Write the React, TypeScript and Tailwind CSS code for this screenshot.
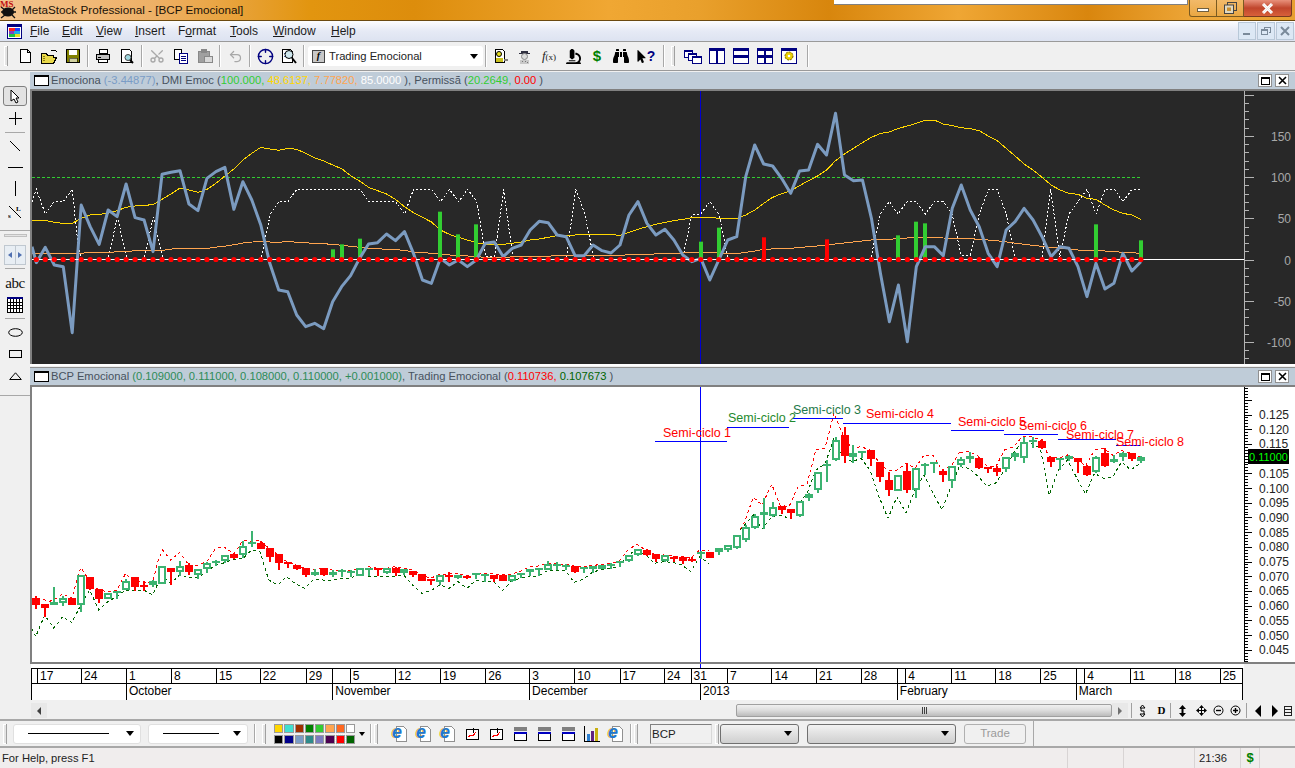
import React from 'react';
import { Crosshair, Scissors, Undo2 } from 'lucide-react';
import { FaBinoculars, FaMicroscope, FaMousePointer } from 'react-icons/fa';

// ---------- chart data (read off the screen, 1/3 px units on y) ----------
const X = (n: number) => 36.3 + 8.98 * n;
const yTop = (v: number) => 90 + v / 3;

const emociona = [518,472,525,530,728,345,410,463,360,380,282,383,390,485,253,247,242,342,362,265,245,232,358,275,330,405,520,600,605,675,710,700,716,635,590,557,505,462,458,432,452,425,490,570,580,505,525,510,530,510,460,456,500,475,465,420,394,398,435,440,497,497,465,482,489,465,375,335,400,435,418,450,495,515,505,570,510,450,440,260,165,222,228,265,310,243,240,163,195,70,255,272,270,385,550,695,585,755,530,470,470,497,355,285,360,410,490,530,420,395,355,390,440,500,470,475,530,620,520,597,580,490,543,515];
const dmiYellow = [391,391,397,400,400,385,375,373,370,362,352,348,346,344,328,312,294,300,307,298,280,258,237,210,190,172,177,181,175,178,190,204,213,225,236,257,273,292,302,312,328,350,368,382,396,420,433,442,450,458,463,463,463,460,456,450,447,442,437,436,435,434,433,433,434,436,427,418,410,403,397,392,388,383,381,382,385,385,385,375,360,340,322,311,303,287,272,258,240,212,192,175,158,142,130,126,115,108,100,91,90,102,107,113,116,122,138,152,175,198,222,240,262,285,300,310,313,325,328,345,360,370,375,388];
const orangeA = [5,490,130,490,153,487,199,487,244,484,290,481,335,481,358,477,380,475,449,475,472,471,495,468,517,464,540,459,563,456,585,455,630,457,652,454,675,457,720,460,766,463,789,466,811,469,834,472,857,475,880,476,902,478,925,479,947,481,970,486,1016,490,1038,493,1061,495,1084,497,1107,498,1130,500,1153,502,1198,503,1221,500,1289,500,1312,499,1334,496,1494,496,1530,493,1568,493];
const orangeB = [0,493,30,490,123,488,215,490,250,484,275,478,340,475,405,468,449,462,493,456,536,450,580,448,645,442,711,444,776,446,841,452,906,463,971,472,1037,480,1103,483,1146,487,1190,490];
const whiteA = [[5,335,16,298,39,372,61,335,84,335,107,298,122,470,130,500],[199,500,221,380,244,500],[290,500,312,380,335,500],[585,500,608,372,630,335,652,335,675,298,834,298,857,335,925,335,947,372,970,298,1016,298,1038,335,1061,298,1084,335,1107,298,1130,335,1153,500,1175,500,1198,298,1221,500],[1357,500,1380,298,1403,372,1425,500]];
const whiteB = [[80,500,101,375,123,372,145,335,167,372,188,500],[536,500,558,372,580,335,601,372,623,335,645,335,667,372,689,335,711,335,732,372,754,495,776,495,798,372,820,298,841,298,863,372,884,500],[950,500,971,298,993,500,1015,372,1037,335,1059,298,1081,372,1103,298,1125,298,1146,335,1168,298,1190,298]];
const greenBars: [number, number][] = [[33,478],[34,463],[36,446],[45,365],[47,433],[49,403],[74,455],[76,413],[96,436],[98,395],[99,400],[118,403],[123,451]];
const redBars: [number, number][] = [[81,442],[88,448]];

type Candle = ['g' | 'r' | 'h', number, number, number, number];
// n0..n79: y = 500 + v/3
const candlesA: Candle[] = [
  ['r',293,315,288,326],['h',313,325,313,352],['g',305,316,262,316],['g',295,310,288,317],['r',295,315,295,315],['g',225,315,225,335],['r',232,268,232,270],['r',268,297,268,308],['g',278,297,278,297],['g',272,276,272,298],
  ['g',242,270,236,270],['r',232,262,232,272],['r',255,260,243,272],['g',243,255,240,262],['g',198,252,198,252],['r',205,215,205,255],['g',197,217,183,227],['r',195,215,190,225],['g',206,226,206,237],['g',188,206,186,218],
  ['g',183,187,180,197],['g',165,183,165,190],['r',162,173,162,178],['g',138,165,122,175],['g',125,130,93,140],['r',128,147,122,147],['r',145,172,145,185],['r',163,190,163,210],['r',185,190,185,203],['r',196,206,196,210],
  ['r',205,225,205,232],['g',215,226,208,228],['r',205,225,205,228],['g',215,225,210,232],['g',211,214,208,232],['g',212,215,210,230],['g',203,228,203,228],['g',203,207,203,228],['r',205,210,205,228],['g',205,220,205,222],
  ['r',203,218,200,228],['g',206,218,206,225],['r',212,225,212,232],['r',222,243,222,243],['r',237,243,237,255],['g',224,245,224,255],['r',226,232,215,245],['g',224,235,224,237],['r',228,234,225,237],['g',220,224,220,237],
  ['g',222,226,222,245],['r',224,236,224,245],['r',224,243,224,243],['g',224,243,224,245],['g',220,224,218,235],['g',206,216,206,227],['g',205,209,205,228],['g',193,210,184,210],['g',193,197,187,210],['g',195,198,193,210],
  ['r',197,215,197,218],['g',202,205,202,218],['g',198,208,198,218],['g',196,208,196,208],['g',193,197,190,206],['g',184,187,184,200],['g',165,184,165,186],['g',146,166,146,168],['r',150,165,148,167],['r',163,176,163,187],
  ['g',165,184,165,186],['r',170,176,167,187],['r',172,184,168,192],['r',177,183,172,187],['g',157,162,153,178],['r',155,175,155,175],['g',144,156,144,165],['g',135,150,135,157],['g',105,144,105,146],['g',80,120,75,125],
];
// n80..n123: y = 390 + v/3
const candlesB: Candle[] = [
  ['g',378,415,373,418],['g',367,375,325,418],['g',350,378,335,380],['r',348,360,348,372],['r',358,368,358,388],['g',333,378,333,380],['g',313,325,310,332],['g',245,300,245,308],['g',222,226,210,275],['g',150,210,140,212],
  ['r',135,198,110,220],['g',190,202,165,220],['g',183,190,183,205],['r',180,208,180,228],['r',216,262,216,275],['r',270,300,245,318],['g',255,302,255,304],['r',243,300,220,308],['g',235,300,235,325],['g',222,226,220,255],
  ['g',217,222,217,248],['r',242,256,238,275],['g',228,274,228,293],['g',208,226,202,230],['g',198,208,185,220],['r',205,235,200,238],['r',230,235,230,248],['r',233,245,228,257],['g',200,237,200,247],['g',190,200,187,212],
  ['g',155,203,140,220],['g',150,155,140,175],['r',153,173,148,176],['r',200,217,200,230],['g',205,208,203,240],['g',198,207,195,212],['r',205,215,203,248],['r',228,254,226,257],['g',200,245,198,248],['r',190,227,175,230],
  ['g',208,217,195,220],['g',190,202,187,212],['r',190,208,190,212],['g',201,212,198,220],
];

// dashed envelope: x,y pairs per zoomed region
const upperA = [5,300,17,295,40,298,55,305,71,300,98,282,125,295,152,203,165,222,190,258,206,270,233,275,260,270,287,220,300,235,330,245,350,250,370,240,385,180,398,150,422,180,449,157,476,195,503,195,530,185,557,145,584,142,611,162,640,120,665,125,690,120,716,145,745,165,770,185,797,195,824,205,851,210,879,205,905,210,932,210,960,212,990,205];
const upperB = [24,200,52,205,78,205,105,200,130,205,158,210,185,225,212,235,240,222,267,222,294,220,321,228,348,220,375,220,402,222,427,222,453,222,480,215,508,200,535,198,562,190,589,192,616,193,642,198,669,200,696,197,723,193,750,190,777,184,804,150,830,133,857,150,884,163,911,165,938,168,965,168,992,175,1019,150,1046,152];
const upperC = [300,418,312,400,340,322,366,345,395,283,420,345,447,350,474,290,501,282,528,178,555,175,582,70,609,135,636,175,663,170,690,180,717,216,744,243,771,240,798,220,825,235,852,195,879,195,906,240,933,228,960,185];
const upperD = [30,187,57,185,83,198,110,228,136,232,163,180,190,170,216,140,243,140,270,150,297,200,324,205,351,195,378,205,405,228,432,180,459,175,486,195,513,182,540,190,567,200];
const lowerA = [5,385,17,410,44,345,71,385,98,350,125,368,150,320,179,270,206,330,233,305,260,290,287,270,314,270,341,270,368,285,395,225,422,250,449,225,476,232,503,232,530,215,557,195,584,188,611,178,640,175,665,150,690,155,716,240,743,255,770,230,797,252,824,265,851,238,879,240,905,242,932,235,960,235,985,225];
const lowerB = [24,228,52,228,78,228,105,228,132,226,158,255,185,280,212,272,240,255,267,265,294,245,321,265,348,240,375,245,402,245,427,272,453,245,480,235,508,228,535,228,562,212,589,210,616,212,642,247,669,238,696,218,723,208,750,206,777,198,804,165,830,150,857,165,884,190,911,185,938,187,965,195,992,215,1019,170,1046,190];
const lowerC = [300,420,340,375,366,418,395,380,420,375,447,385,474,345,501,310,528,240,555,222,582,145,609,200,636,215,663,205,690,240,717,320,744,385,771,320,798,368,825,300,852,255,879,310,906,360,933,290,960,225];
const lowerD = [30,230,57,235,83,258,110,288,136,280,163,240,190,190,216,155,243,160,270,175,297,315,324,240,351,210,378,262,405,312,432,250,459,265,486,262,513,215,540,240,567,222];

const pairs = (a: number[], fx: (v: number) => number, fy: (v: number) => number) => {
  const out: string[] = [];
  for (let i = 0; i < a.length; i += 2) out.push(`${fx(a[i]).toFixed(1)},${fy(a[i + 1]).toFixed(1)}`);
  return out.join(' ');
};
const z9x = (v: number) => 30 + v / 2.529;
const z10x = (v: number) => 650 + v / 2.423;
const low = (v: number) => 500 + v / 3;
const up = (v: number) => 390 + v / 3;

const labels: [string, number, number, string][] = [
  ['Semi-ciclo 1', 663, 437, '#ff0000'],
  ['Semi-ciclo 2', 728, 422, '#1f8a2e'],
  ['Semi-ciclo 3', 793, 414, '#1f7a4a'],
  ['Semi-ciclo 4', 866, 418, '#ff0000'],
  ['Semi-ciclo 5', 958, 426, '#ff0000'],
  ['Semi-ciclo 6', 1019, 430, '#ff0000'],
  ['Semi-ciclo 7', 1066, 439, '#ff0000'],
  ['Semi-ciclo 8', 1116, 446, '#ff0000'],
];
const cycleLines = [[655,727,441.5],[727,789,427.5],[793,843,418.5],[843,951,423.5],[951,1004,430.5],[1004,1058,434.5],[1058,1116,439.5],[1116,1140,445.5]];

// ---------- charts ----------
function IndicatorChart() {
  const ticks: number[] = [];
  for (let v = -120; v <= 200; v += 10) ticks.push(v);
  const vy = (v: number) => 259.5 - v * 0.824;
  return (
    <svg className="block" width="1265" height="273" viewBox="30 91 1265 273" style={{ fontFamily: '"Liberation Sans", sans-serif' }}>
      <line x1="32" x2="1141" y1="177.5" y2="177.5" stroke="#32cd32" strokeDasharray="3 2" shapeRendering="crispEdges" />
      <line x1="700.5" x2="700.5" y1="91" y2="364" stroke="#0000d0" shapeRendering="crispEdges" />
      {whiteA.map((a, i) => <polyline key={i} points={pairs(a, z9x, yTop)} fill="none" stroke="#fff" strokeDasharray="2 2" shapeRendering="crispEdges" />)}
      {whiteB.map((a, i) => <polyline key={i} points={pairs(a, z10x, yTop)} fill="none" stroke="#fff" strokeDasharray="2 2" shapeRendering="crispEdges" />)}
      <polyline points={`32,${yTop(391)} ` + dmiYellow.map((v, i) => `${X(i)},${yTop(v)}`).join(' ')} fill="none" stroke="#ffd700" shapeRendering="crispEdges" />
      <polyline points={pairs(orangeA, z9x, yTop) + ' ' + pairs(orangeB, z10x, yTop)} fill="none" stroke="#ffa54f" shapeRendering="crispEdges" />
      {greenBars.map(([n, t]) => <line key={n} x1={Math.round(X(n))} x2={Math.round(X(n))} y1={yTop(t)} y2="259" stroke="#32cd32" strokeWidth="4" />)}
      {redBars.map(([n, t]) => <line key={n} x1={Math.round(X(n))} x2={Math.round(X(n))} y1={yTop(t)} y2="259" stroke="#ff0000" strokeWidth="4" />)}
      <polyline points={`32,${yTop(470)} ` + emociona.map((v, i) => `${X(i)},${yTop(v)}`).join(' ')} fill="none" stroke="#7b9bc0" strokeWidth="3" strokeLinejoin="round" />
      <line x1="32" x2="1245" y1="259.5" y2="259.5" stroke="#fff" shapeRendering="crispEdges" />
      {emociona.map((_, i) => <circle key={i} cx={X(i)} cy="259.5" r="2.6" fill="#ff0000" />)}
      <line x1="1244.5" x2="1244.5" y1="91" y2="364" stroke="#b4b4b4" shapeRendering="crispEdges" />
      {ticks.map(v => <line key={v} x1="1245" x2={v % 50 === 0 ? 1254 : 1249} y1={Math.round(vy(v)) + 0.5} y2={Math.round(vy(v)) + 0.5} stroke="#b4b4b4" shapeRendering="crispEdges" />)}
      {[150, 100, 50, 0, -50, -100].map(v => <text key={v} x="1291" y={vy(v) + 5} textAnchor="end" fontSize="12" fill="#a8a8a8">{v}</text>)}
    </svg>
  );
}

function CandleMark({ c, n, base }: { c: Candle; n: number; base: (v: number) => number }) {
  const [k, t, b, wt, wb] = c;
  const cx = Math.round(X(n));
  const col = k === 'g' ? '#3cb371' : '#ff0000';
  const top = Math.round(base(t));
  const bot = Math.round(base(b));
  const solid = k === 'r' || bot - top < 3;
  return (
    <g shapeRendering="crispEdges">
      <rect x={cx - 1} width="2" y={base(wt)} height={Math.max(1, base(wb) - base(wt))} fill={col} />
      {solid ? (
        <rect x={cx - 4} width="8" y={top} height={Math.max(2, bot - top)} fill={col} />
      ) : (
        <rect x={cx - 3} width="6" y={top + 1} height={bot - top - 2} fill="#fff" stroke={col} strokeWidth="2" />
      )}
    </g>
  );
}

function PriceChart() {
  const ticks: number[] = [];
  for (let i = -10; i <= 85; i++) ticks.push(i);
  // 0.110 sits under the last-price box, as on the real axis
  const labelsY = Array.from({ length: 17 }, (_, i) => i).filter(i => i !== 3);
  return (
    <svg className="block bg-white" width="1265" height="275" viewBox="30 387 1265 275" style={{ fontFamily: '"Liberation Sans", sans-serif' }}>
      <line x1="700.5" x2="700.5" y1="387" y2="662" stroke="#0000ff" shapeRendering="crispEdges" />
      {[pairs(upperA, v => 30 + v / 3, low), pairs(upperB, v => 360 + v / 3, low), pairs(upperC, v => 640 + v / 3, up), pairs(upperD, v => 950 + v / 2.99, up)].map((p, i) => (
        <polyline key={i} points={p} fill="none" stroke="#ff0000" strokeDasharray="3 3" shapeRendering="crispEdges" />
      ))}
      {[pairs(lowerA, v => 30 + v / 3, low), pairs(lowerB, v => 360 + v / 3, low), pairs(lowerC, v => 640 + v / 3, up), pairs(lowerD, v => 950 + v / 2.99, up)].map((p, i) => (
        <polyline key={i} points={p} fill="none" stroke="#006400" strokeDasharray="3 3" shapeRendering="crispEdges" />
      ))}
      {candlesA.map((c, i) => <CandleMark key={i} c={c} n={i} base={low} />)}
      {candlesB.map((c, i) => <CandleMark key={i} c={c} n={i + 80} base={up} />)}
      {cycleLines.map(([a, b, y], i) => <line key={i} x1={a} x2={b} y1={y} y2={y} stroke="#0000ff" shapeRendering="crispEdges" />)}
      {labels.map(([t, x, y, c]) => <text key={t} x={x} y={y} fontSize="12.5" fill={c}>{t}</text>)}
      <line x1="1244.5" x2="1244.5" y1="387" y2="662" stroke="#000" shapeRendering="crispEdges" />
      {ticks.map(i => {
        const y = Math.round(414.5 + i * 2.94) + 0.5;
        return <line key={i} x1="1245" x2={i % 5 === 0 ? 1252 : 1248} y1={y} y2={y} stroke="#000" shapeRendering="crispEdges" />;
      })}
      {labelsY.map(i => <text key={i} x="1259" y={419 + i * 14.7} fontSize="12" fill="#222">{(0.125 - i * 0.005).toFixed(3)}</text>)}
      <rect x="1248" y="449" width="41" height="15" fill="#000" />
      <text x="1249" y="460.5" fontSize="11" fill="#00ff00">0.11000</text>
    </svg>
  );
}

// ---------- date axis ----------
const dayCells: [string, number][] = [['',31],['17',37],['24',81],['1',126],['8',171],['15',216],['22',260],['29',306],['',332.5],['5',350],['12',395],['19',440],['26',485.5],['3',529.5],['10',574.6],['17',620],['24',664.5],['31',691],['7',727.5],['14',772],['21',816.6],['28',861.4],['',897.5],['4',906],['11',952],['18',996],['25',1041],['',1076.6],['4',1085],['11',1130.5],['18',1176],['25',1220.5]];
const monthCells: [string, number][] = [['',31],['October',126],['November',332.5],['December',529.5],['2013',700.5],['February',897.5],['March',1076.6]];
const AXIS_END = 1243;

function AxisRow({ cells, className }: { cells: [string, number][]; className: string }) {
  return (
    <div className={`flex ${className}`}>
      {cells.map(([t, x], i) => (
        <div key={i} className="border-l border-black pl-[2px] leading-[15px] overflow-hidden" style={{ width: (i + 1 < cells.length ? cells[i + 1][1] : AXIS_END) - x }}>{t}</div>
      ))}
    </div>
  );
}

// ---------- small toolbar drawings ----------
const Px = ({ w = 16, h = 16, children }: { w?: number; h?: number; children: React.ReactNode }) => (
  <svg width={w} height={h} viewBox={`0 0 ${w} ${h}`} shapeRendering="crispEdges" className="block">{children}</svg>
);
const Slot = ({ w = 24, children }: { w?: number; children?: React.ReactNode }) => (
  <div className="flex items-center justify-center shrink-0 h-full" style={{ width: w }}>{children}</div>
);
const Sep = ({ w = 6 }: { w?: number }) => (
  <div className="flex justify-center shrink-0 py-[3px] h-full" style={{ width: w }}><div className="w-[2px] h-full bg-[#a8a8a8] border-r border-white" /></div>
);
const Grip = () => <div className="shrink-0 w-[3px] h-[20px] self-center border-l border-t border-b border-white bg-[#e4e4e4] shadow-[1px_0_0_#a0a0a0]" />;

const NewDoc = () => <Px><path d="M3.5 1.5h7l3 3v10h-10z M10.5 1.5v3h3" fill="#fff" stroke="#000" /></Px>;
const OpenFolder = () => <Px w={18}><path d="M1.5 5.5h5l1 2h6v2h3l-3 6h-12z" fill="#e8d84a" stroke="#000" /><path d="M3 8h2M3 10h2M3 12h2" stroke="#8a7a10" /><path d="M11 3l2-1h2l2 2" fill="none" stroke="#000" /></Px>;
const Save = () => <Px><rect x="1.5" y="1.5" width="13" height="13" fill="#808000" stroke="#000" /><rect x="4" y="2" width="8" height="5" fill="#fff" /><rect x="4" y="10" width="8" height="4" fill="#d0d0a0" stroke="#000" strokeWidth="0.5" /></Px>;
const Printer = () => <Px><path d="M4.5 1.5h8v4h-8z" fill="#fff" stroke="#000" /><path d="M1.5 6.5h13v5h-13z" fill="#c0c0c0" stroke="#000" /><path d="M3.5 11.5h9v3h-9z" fill="#fff" stroke="#000" /><path d="M3 9h3" stroke="#000" /></Px>;
const Preview = () => <Px><path d="M2.5 1.5h8l2 2v11h-10z" fill="#fff" stroke="#000" /><circle cx="9" cy="9.5" r="3" fill="#9fd8e0" stroke="#444" shapeRendering="auto" /><path d="M11 12l3 3" stroke="#000" strokeWidth="2" shapeRendering="auto" /></Px>;
const CopyDoc = () => <Px><path d="M1.5 1.5h7v10h-7z" fill="#fff" stroke="#000" /><path d="M6.5 5.5h8v10h-8z" fill="#fff" stroke="#000080" /><path d="M8 8h5M8 10h5M8 12h5" stroke="#000080" /></Px>;
const Paste = () => <Px><path d="M1.5 3.5h11v11h-11z" fill="#a0a0a0" stroke="#888" /><rect x="4" y="1" width="6" height="4" fill="#888" /><path d="M7.5 8.5h8v6h-8z" fill="#d8d8d8" stroke="#888" /></Px>;
const ZoomDoc = () => <Px w={18}><path d="M2.5 1.5h8l2 2v11h-10z" fill="#fff" stroke="#000" /><path d="M4 5h5M4 8h3" stroke="#3a5a9a" /><circle cx="9" cy="6.5" r="4" fill="#cfe8ef" stroke="#000" shapeRendering="auto" /><path d="M12 10l4 5" stroke="#000" strokeWidth="2" shapeRendering="auto" /></Px>;
const LockMan = () => <Px w={18}><path d="M3.5 1.5h7l2 2v11h-9z" fill="#fff" stroke="#000" /><circle cx="7" cy="6" r="2.5" fill="#e8e020" stroke="#000" shapeRendering="auto" /><path d="M4 10h7v4h-7z" fill="#c8c020" /><path d="M12 11h4v2h-4z" fill="#808080" /></Px>;
const Hatman = () => <Px w={18}><path d="M5 3h7v2h-7zM3 5h11v1H3z" fill="#303040" /><circle cx="8.5" cy="8.5" r="3" fill="#ddd" stroke="#888" shapeRendering="auto" /><path d="M4 12h9v4H4z" fill="#c8c8c8" /><path d="M6 13h1v1H6zM9 13h1v1H9zM11 14h1v1h-1z" fill="#777" /></Px>;
const Tile = ({ kind }: { kind: number }) => (
  <Px>
    <rect x="0.5" y="0.5" width="15" height="15" fill="#fff" stroke="#000080" />
    <rect x="1" y="1" width="14" height="2" fill="#000080" />
    {kind === 0 && <rect x="7" y="1" width="2" height="14" fill="#000080" />}
    {kind === 1 && <rect x="1" y="7" width="14" height="3" fill="#000080" />}
    {kind === 2 && <><rect x="7" y="1" width="2" height="14" fill="#000080" /><rect x="1" y="7" width="14" height="3" fill="#000080" /></>}
    {kind === 3 && <><circle cx="8" cy="8" r="4" fill="#e8d000" stroke="#806000" strokeDasharray="2 1" shapeRendering="auto" /><circle cx="8" cy="8" r="1.3" fill="#fff" shapeRendering="auto" /></>}
  </Px>
);
const Cascade = () => <Px w={18}><rect x="0.5" y="2.5" width="8" height="7" fill="#fff" stroke="#000080" /><rect x="0" y="2" width="9" height="2" fill="#000080" /><rect x="4.5" y="5.5" width="8" height="7" fill="#fff" stroke="#000080" /><rect x="4" y="5" width="9" height="2" fill="#000080" /><rect x="8.5" y="8.5" width="9" height="7" fill="#fff" stroke="#000080" /><rect x="8" y="8" width="10" height="2" fill="#000080" /></Px>;
const IeDoc = () => (
  <div className="relative w-[16px] h-[16px]">
    <Px><path d="M4.5 0.5h7l3 3v12h-10z" fill="#fff" stroke="#909090" /></Px>
    <span className="absolute left-[0px] top-[-4px] text-[18px] leading-[20px] font-bold italic text-[#1e78d0] [text-shadow:-1px_0_0_#f0c020]">e</span>
  </div>
);
const MiniChart = () => <Px w={13} h={13}><rect x="0.5" y="2.5" width="12" height="10" fill="#fff" stroke="#000" /><path d="M2 10l3-2 2 1 3-4" fill="none" stroke="#ff0000" /><path d="M7 1v5" stroke="#000" /></Px>;
const MiniWin = () => <Px w={13} h={14}><rect x="0" y="0" width="13" height="4" fill="#808080" /><rect x="0.5" y="5.5" width="12" height="8" fill="#fff" stroke="#000" /><rect x="0" y="5" width="13" height="2" fill="#0000c0" /></Px>;
const Bars = () => <Px><path d="M0.5 0v15.5h16" fill="none" stroke="#000" /><rect x="3" y="8" width="3" height="7" fill="#2b7fd0" /><rect x="7" y="5" width="3" height="10" fill="#602080" /><rect x="11" y="2" width="3" height="13" fill="#c8b010" /></Px>;

const ComboArrow = () => <div className="w-0 h-0 border-x-[4px] border-x-transparent border-t-[5px] border-t-black" />;
const Combo = ({ width, line }: { width: number; line?: number }) => (
  <div className="flex items-center h-[20px] bg-white rounded-[3px] border border-[#e0e0e0] shrink-0 pr-[6px]" style={{ width }}>
    <div className="mx-[14px] h-[1px] bg-black" style={{ width: line }} />
    <div className="ml-auto"><ComboArrow /></div>
  </div>
);
const GrayCombo = ({ width }: { width: number }) => (
  <div className="flex items-center justify-end h-[20px] rounded-[3px] border border-[#707070] bg-gradient-to-b from-[#f2f2f2] to-[#cfcfcf] pr-[6px] shrink-0" style={{ width }}><ComboArrow /></div>
);

const swatches = ['#ffd700','#40e0d0','#a03000','#008000','#32cd32','#ffa54f','#ff6820','#ffffff','#000000','#00008b','#7a9cc6','#2e8b8b','#7b7bc0','#4b0050','#ff0000','#006400'];

function Menu({ t, u, x }: { t: string; u: number; x: number }) {
  return (
    <span className="shrink-0" style={{ width: x }}>
      {t.slice(0, u)}<span className="underline">{t[u]}</span>{t.slice(u + 1)}
    </span>
  );
}

function PaneTitle({ children }: { children: React.ReactNode }) {
  return (
    <div className="flex items-center h-[17px] bg-[#bfccd8] pl-[4px] text-[11.2px] text-[#47525e] whitespace-nowrap">
      <div className="w-[15px] h-[11px] bg-white border border-black border-t-2 mr-[2px] shrink-0" />
      <div className="flex-1">{children}</div>
      <div className="w-[14px] h-[13px] bg-white border border-[#909090] flex items-center justify-center mr-[3px]"><div className="w-[9px] h-[8px] border border-black border-t-2" /></div>
      <div className="w-[14px] h-[13px] bg-white border border-[#909090] flex items-center justify-center mr-[6px]">
        <svg width="9" height="9" viewBox="0 0 9 9"><path d="M1 1l7 7M8 1L1 8" stroke="#000" strokeWidth="1.6" /></svg>
      </div>
    </div>
  );
}

const Rule = ({ className = '' }: { className?: string }) => <div className={`h-[1px] bg-[#a8a8a8] ${className}`} />;

export default function App() {
  return (
    <div className="relative w-[1295px] h-[768px] overflow-hidden flex flex-col bg-[#f0f0f0] text-black text-[12px]" style={{ fontFamily: '"Liberation Sans", Arial, sans-serif' }}>
      {/* window caption */}
      <div className="flex items-start h-[21px] shrink-0 border-b border-[#6b4a10] bg-[linear-gradient(90deg,#f3c48e_0%,#eeb066_12%,#e2950f_24%,#dd8d0c_32%,#f0a733_47%,#e9a02c_54%,#d8860d_64%,#efa634_74%,#d9860e_84%,#efa93c_93%,#e8a030_100%)]">
        <div className="relative w-[20px] h-[20px] shrink-0">
          <svg width="20" height="20" viewBox="0 0 20 20" className="absolute left-0 top-0">
            <ellipse cx="8" cy="12" rx="6" ry="4.5" fill="#111" />
            <path d="M1 7l4 3M1 12h4M1 18l4-3M15 7l-3 3M16 12h-3M15 18l-3-3" stroke="#111" strokeWidth="1.3" />
          </svg>
          <span className="absolute left-0 top-0 text-[9px] font-bold text-[#c01010] leading-[9px]" style={{ fontFamily: '"Liberation Serif", serif' }}>MS</span>
        </div>
        <span className="ml-[2px] text-[11.7px] leading-[20px] text-[#1a1208]">MetaStock Professional - [BCP Emocional]</span>
        <div className="ml-auto flex mr-[3px]">
          <div className="w-[28px] h-[17px] border border-t-0 border-[#7a5a20] rounded-bl-[3px] bg-gradient-to-b from-[#f4c27e]/70 to-[#e8a848]/60 flex items-center justify-center">
            <div className="w-[12px] h-[4px] bg-white border border-[#6f5f40] mt-[3px]" />
          </div>
          <div className="w-[27px] h-[17px] border-y border-r border-t-0 border-[#7a5a20] bg-gradient-to-b from-[#f4c27e]/70 to-[#e8a848]/60 flex items-center justify-center">
            <svg width="13" height="12" viewBox="0 0 13 12"><rect x="3.5" y="0.5" width="9" height="8" fill="none" stroke="#444" /><rect x="0.5" y="3" width="9" height="8.5" fill="#e0d8c0" stroke="#444" /><rect x="3" y="5.5" width="4" height="3.5" fill="#c89030" /></svg>
          </div>
          <div className="w-[48px] h-[17px] border-y border-r border-t-0 border-[#7a3a20] rounded-br-[3px] bg-gradient-to-b from-[#e8907a] via-[#c0452c] to-[#d8603a] flex items-center justify-center">
            <svg width="13" height="11" viewBox="0 0 13 11"><path d="M2 1l9 9M11 1l-9 9" stroke="#fff" strokeWidth="3" /><path d="M2 1l9 9M11 1l-9 9" stroke="#e8e8e8" strokeWidth="1" /></svg>
          </div>
        </div>
      </div>

      {/* menu bar */}
      <div className="flex items-center h-[20px] shrink-0 bg-gradient-to-b from-[#fdfdfe] via-[#e6eaf5] to-[#dde3f1] text-[12px] text-[#1c1c1c]">
        <div className="ml-[7px] mr-[8px] w-[15px] h-[15px] shrink-0">
          <Px w={15} h={15}>
            <rect x="0.5" y="0.5" width="14" height="14" fill="#fff" stroke="#000080" />
            <rect x="1" y="1" width="13" height="2" fill="#000080" />
            <rect x="2" y="4" width="6" height="3" fill="#ff2020" /><rect x="8" y="4" width="5" height="3" fill="#2040ff" />
            <rect x="2" y="7" width="5" height="3" fill="#8040c0" /><rect x="7" y="7" width="6" height="3" fill="#20b0e0" />
            <rect x="2" y="10" width="6" height="3" fill="#20c040" /><rect x="8" y="10" width="5" height="3" fill="#e8e020" />
          </Px>
        </div>
        <Menu t="File" u={0} x={32} />
        <Menu t="Edit" u={0} x={34} />
        <Menu t="View" u={0} x={39} />
        <Menu t="Insert" u={0} x={43} />
        <Menu t="Format" u={1} x={52} />
        <Menu t="Tools" u={0} x={43} />
        <Menu t="Window" u={0} x={58} />
        <Menu t="Help" u={0} x={40} />
        <div className="ml-auto flex gap-[1px] mr-[1px]">
          {[0, 1, 2].map(i => (
            <div key={i} className="w-[18px] h-[18px] bg-[#dce8f5] border border-[#b8c8d8] flex items-center justify-center">
              <svg width="10" height="10" viewBox="0 0 10 10" shapeRendering="crispEdges">
                {i === 0 && <rect x="1" y="7" width="7" height="2" fill="#7a8a9a" />}
                {i === 1 && <path d="M3.5 2.5v-1h6v5h-2M0.5 3.5h6v5h-6z M0.5 4.5h6" fill="none" stroke="#7a8a9a" />}
                {i === 2 && <path d="M1 1l8 8M9 1l-8 8" stroke="#7a8a9a" strokeWidth="2" shapeRendering="auto" />}
              </svg>
            </div>
          ))}
        </div>
      </div>

      {/* main toolbar */}
      <div className="flex items-stretch h-[30px] shrink-0 border-y border-[#9a9a9a] pl-[4px]">
        <Grip />
        <div className="w-[6px] shrink-0" />
        <Slot><NewDoc /></Slot><Slot><OpenFolder /></Slot><Slot><Save /></Slot><Sep />
        <Slot><Printer /></Slot><Slot><Preview /></Slot><Sep />
        <Slot><Scissors size={16} color="#a8a8a8" className="-rotate-90" /></Slot><Slot><CopyDoc /></Slot><Slot><Paste /></Slot><Sep />
        <Slot><Undo2 size={15} color="#a8a8a8" /></Slot><Sep />
        <Slot><Crosshair size={17} color="#000080" /></Slot><Slot><ZoomDoc /></Slot><Sep />
        <div className="shrink-0 w-[175px] h-[20px] self-center bg-white rounded-[3px] flex items-center pl-[4px] pr-[5px] ml-[1px]">
          <div className="w-[13px] h-[13px] bg-[#c8c8c8] border border-[#444] flex items-center justify-center italic font-bold text-[10px] leading-none" style={{ fontFamily: '"Liberation Serif", serif' }}>f</div>
          <span className="ml-[4px] text-[11.2px] text-[#222]">Trading Emocional</span>
          <div className="ml-auto"><ComboArrow /></div>
        </div>
        <Sep />
        <Slot><LockMan /></Slot><Slot><Hatman /></Slot>
        <Slot><span className="italic text-[13px] text-[#222]" style={{ fontFamily: '"Liberation Serif", serif' }}>f<span className="text-[9px] not-italic">(x)</span></span></Slot>
        <Slot><FaMicroscope size={15} color="#000" /></Slot>
        <Slot><span className="text-[15px] font-bold text-[#008000]">$</span></Slot>
        <Slot><FaBinoculars size={16} color="#000" /></Slot>
        <Slot>
          <div className="flex items-start"><FaMousePointer size={13} color="#000" /><span className="text-[14px] font-bold leading-[12px] text-[#000080] -ml-[1px]">?</span></div>
        </Slot>
        <Sep w={14} />
        <Grip />
        <div className="w-[7px] shrink-0" />
        <Slot><Cascade /></Slot><Slot><Tile kind={0} /></Slot><Slot><Tile kind={1} /></Slot><Slot><Tile kind={2} /></Slot><Slot><Tile kind={3} /></Slot>
        <Sep w={14} />
      </div>

      {/* workspace */}
      <div className="flex flex-1 min-h-0">
        {/* drawing tools */}
        <div className="w-[30px] shrink-0 flex flex-col items-center">
          <div className="h-[15px] shrink-0" />
          <div className="w-[24px] h-[20px] shrink-0 rounded-[3px] border border-[#808080] bg-[#e2e2e2] flex items-center justify-center">
            <svg width="10" height="15" viewBox="0 0 10 15"><path d="M1 1v11l3-2 2 4 2-1-2-4h3z" fill="#fff" stroke="#000" /></svg>
          </div>
          <div className="h-[24px] flex items-center shrink-0"><Px w={13} h={13}><path d="M6 0h1v13H6zM0 6h13v1H0z" fill="#000" /></Px></div>
          <Rule className="w-[20px] shrink-0 mt-[2px]" />
          <div className="h-[22px] mt-[2px] flex items-center shrink-0"><svg width="12" height="12" viewBox="0 0 12 12"><path d="M1 1l10 10" stroke="#000" /></svg></div>
          <div className="h-[21px] flex items-center shrink-0"><Px w={15} h={3}><rect y="1" width="15" height="1" fill="#000" /></Px></div>
          <div className="h-[21px] flex items-center shrink-0"><Px w={3} h={15}><rect x="1" width="1" height="15" fill="#000" /></Px></div>
          <div className="h-[25px] flex items-center shrink-0">
            <svg width="14" height="14" viewBox="0 0 14 14" style={{ fontFamily: '"Liberation Serif", serif' }}>
              <path d="M1 1l12 12" stroke="#000" />
              <text x="8" y="6" fontSize="7" fontWeight="700">L</text>
              <text x="0" y="13" fontSize="7" fontWeight="700">s</text>
            </svg>
          </div>
          <div className="h-[1px] w-full bg-[#a8a8a8] shrink-0 mt-[6px]" />
          <div className="w-[23px] h-[3px] shrink-0 bg-[#e4e4e4] border border-[#c0c0c0] mt-[3px]" />
          <div className="flex w-[22px] h-[20px] shrink-0 mt-[8px] border border-[#c0c8d0] bg-[#e8eef4]">
            <div className="flex-1 flex items-center justify-center border-r border-[#c0c8d0]"><div className="border-y-[3px] border-y-transparent border-r-[4px] border-r-[#5070b0]" /></div>
            <div className="flex-1 flex items-center justify-center"><div className="border-y-[3px] border-y-transparent border-l-[4px] border-l-[#5070b0]" /></div>
          </div>
          <Rule className="w-[20px] shrink-0 mt-[3px]" />
          <div className="h-[21px] mt-[4px] flex items-center shrink-0 text-[15px] leading-none tracking-[-0.5px] text-[#111]" style={{ fontFamily: '"Liberation Serif", serif' }}>abc</div>
          <div className="mt-[3px] shrink-0">
            <Px w={16} h={16}>
              <rect x="0.5" y="0.5" width="15" height="15" fill="#fff" stroke="#000" />
              <rect x="0" y="0" width="16" height="2" fill="#000080" />
              <path d="M3.5 2v14M6.5 2v14M9.5 2v14M12.5 2v14M0 5.5h16M0 8.5h16M0 11.5h16" stroke="#000" />
            </Px>
          </div>
          <Rule className="w-[20px] shrink-0 mt-[5px]" />
          <div className="h-[21px] mt-[3px] flex items-center shrink-0"><svg width="15" height="9" viewBox="0 0 15 9"><ellipse cx="7.5" cy="4.5" rx="6.8" ry="3.8" fill="none" stroke="#000" /></svg></div>
          <div className="h-[22px] flex items-center shrink-0"><div className="w-[13px] h-[8px] border border-black" /></div>
          <div className="h-[22px] flex items-center shrink-0"><svg width="13" height="8" viewBox="0 0 13 8"><path d="M6.5 0.8L12.3 7.5H0.7z" fill="none" stroke="#000" /></svg></div>
          <div className="h-[1px] w-full bg-[#a8a8a8] shrink-0 mt-[8px]" />
        </div>

        {/* chart panes */}
        <div className="flex-1 min-w-0 flex flex-col pt-[1px]">
          <PaneTitle>
            Emociona <span className="text-[#7a9cc6]">(-3.44877)</span>, DMI Emoc (<span className="text-[#32cd32]">100.000,</span> <span className="text-[#ffd700]">48.6137,</span> <span className="text-[#ffa54f]">7.77820,</span> <span className="text-white">85.0000</span> ), Permissã (<span className="text-[#32cd32]">20.2649,</span> <span className="text-[#ff0000]">0.00</span> )
          </PaneTitle>
          <div className="h-[2px] bg-[#808080] shrink-0" />
          <div className="h-[273px] shrink-0 border-l-2 border-[#808080] bg-[#282828] overflow-hidden relative">
            <div className="-ml-[2px]"><IndicatorChart /></div>
          </div>
          <div className="h-[4px] shrink-0 border-t-2 border-white border-b border-b-[#909090]" />
          <PaneTitle>
            BCP Emocional <span className="text-[#2e8b57]">(0.109000, 0.111000, 0.108000, 0.110000, +0.001000)</span>, Trading Emocional (<span className="text-[#ff0000]">0.110736,</span> <span className="text-[#006400]">0.107673</span> )
          </PaneTitle>
          <div className="h-[2px] bg-[#808080] shrink-0" />
          <div className="h-[275px] shrink-0 overflow-hidden relative"><PriceChart /><div className="absolute left-0 top-0 bottom-0 w-[2px] bg-[#808080]" /></div>

          {/* date axis */}
          <div className="h-[38px] shrink-0 flex flex-col text-[12px] border-t-2 border-[#808080]">
            <div className="h-[4px] bg-white w-[1213px] ml-[1px]"><div className="ml-[669px] w-[1px] h-full bg-[#0000ff]" /></div>
            <div className="ml-[1px] w-[1212px] bg-white border-t border-black border-r">
              <AxisRow cells={dayCells} className="h-[15px] border-b border-black" />
              <AxisRow cells={monthCells} className="h-[16px]" />
            </div>
          </div>
          <div className="h-[3px] shrink-0" />

          {/* scrollbar row */}
          <div className="h-[15px] shrink-0 flex items-center">
            <div className="w-[16px] ml-[1px] h-full flex items-center justify-center bg-[#e8e8e8]"><div className="border-y-[4px] border-y-transparent border-r-[4px] border-r-[#404040]" /></div>
            <div className="w-[689px] h-full" />
            <div className="w-[376px] h-[13px] rounded-[2px] border border-[#a0a0a0] bg-gradient-to-b from-[#f0f0f0] via-[#dcdcdc] to-[#bcbcbc] flex items-center justify-center gap-[1px]">
              <div className="w-[1px] h-[7px] bg-[#404040]" /><div className="w-[1px] h-[7px] bg-[#404040]" /><div className="w-[1px] h-[7px] bg-[#404040]" />
            </div>
            <div className="w-[16px] h-full flex items-center justify-center bg-[#e8e8e8]"><div className="border-y-[4px] border-y-transparent border-l-[4px] border-l-[#707070]" /></div>
            <div className="w-[1px] h-full bg-[#a0a0a0] ml-[3px]" />
            <Slot w={21}><svg width="7" height="12" viewBox="0 0 7 12"><path d="M3.5 0L6 3H1zM3.5 12L1 9h5zM2 3v3h3v3" fill="none" stroke="#000" /></svg></Slot>
            <Slot w={17}><span className="font-bold text-[11px] leading-none" style={{ fontFamily: '"Liberation Serif", serif' }}>D</span></Slot>
            <div className="w-[1px] h-full bg-[#a0a0a0]" />
            <Slot w={22}><svg width="7" height="12" viewBox="0 0 7 12"><path d="M3.5 0L7 4H0zM3.5 12L0 8h7z" /><rect x="2.5" y="3" width="2" height="6" /></svg></Slot>
            <Slot w={17}><svg width="11" height="11" viewBox="0 0 11 11"><path d="M5.5 0L8 3H3zM5.5 11L3 8h5zM0 5.5L3 3v5zM11 5.5L8 3v5z" /><path d="M5.5 2v7M2 5.5h7" stroke="#000" /></svg></Slot>
            <Slot w={17}><svg width="11" height="11" viewBox="0 0 11 11"><circle cx="5.5" cy="5.5" r="4.5" fill="none" stroke="#000" /><path d="M3 5.5h5" stroke="#000" strokeWidth="1.4" /></svg></Slot>
            <Slot w={17}><svg width="11" height="11" viewBox="0 0 11 11"><circle cx="5.5" cy="5.5" r="4.5" fill="none" stroke="#000" /><path d="M3 5.5h5M5.5 3v5" stroke="#000" strokeWidth="1.4" /></svg></Slot>
            <div className="w-[1px] h-full bg-[#a0a0a0] ml-[2px]" />
            <Slot w={22}><div className="border-y-[6px] border-y-transparent border-r-[6px] border-r-black" /></Slot>
            <Slot w={12}><div className="border-y-[6px] border-y-transparent border-l-[6px] border-l-black" /></Slot>
            <Slot w={14}><svg width="8" height="10" viewBox="0 0 8 10" shapeRendering="crispEdges"><path d="M0.5 0.5h7v9h-7zM0 3.5h8M0 6.5h8" fill="none" stroke="#222" /></svg></Slot>
          </div>
          <div className="h-[1px] shrink-0" />
        </div>
      </div>

      {/* format toolbar */}
      <div className="flex items-center h-[29px] shrink-0 border-y-2 border-[#a8a8a8] pl-[3px]">
        <Grip />
        <div className="w-[7px] shrink-0" />
        <Combo width={128} line={81} />
        <div className="w-[7px] shrink-0" />
        <Combo width={100} line={59} />
        <Sep w={14} />
        <Grip />
        <div className="w-[9px] shrink-0" />
        <div className="grid grid-cols-8 gap-x-[1px] gap-y-[2px] w-[81px] shrink-0">
          {swatches.map((c, i) => (
            <div key={i} className={`h-[9px] border border-[#9a9a9a] ${i === 14 ? 'outline-1 outline-dotted outline-white' : ''}`} style={{ backgroundColor: c }} />
          ))}
        </div>
        <div className="w-[13px] flex justify-center shrink-0"><div className="border-x-[3px] border-x-transparent border-t-[4px] border-t-black" /></div>
        <Sep w={6} />
        <Grip />
        <div className="w-[11px] shrink-0" />
        <Slot><IeDoc /></Slot><Slot><IeDoc /></Slot><Slot><IeDoc /></Slot>
        <Slot><MiniChart /></Slot><Slot><MiniChart /></Slot>
        <Slot><MiniWin /></Slot><Slot><MiniWin /></Slot><Slot><MiniWin /></Slot>
        <Slot><Bars /></Slot><Slot><IeDoc /></Slot>
        <Sep w={6} />
        <Grip />
        <div className="w-[13px] shrink-0" />
        <div className="w-[62px] h-[20px] shrink-0 border border-[#808080] border-r-[#d8d8d8] border-b-[#d8d8d8] bg-[#f0f0f0] pl-[1px] text-[11.5px] leading-[18px] text-[#222]">BCP</div>
        <div className="w-[3px] shrink-0" />
        <Grip />
        <div className="w-[2px] shrink-0" />
        <GrayCombo width={79} />
        <div className="w-[8px] shrink-0" />
        <GrayCombo width={149} />
        <div className="w-[8px] shrink-0" />
        <div className="w-[62px] h-[20px] shrink-0 rounded-[3px] border border-[#b0b0b0] flex items-center justify-center text-[11.5px] text-[#9a9a9a]">Trade</div>
        <div className="w-[7px] shrink-0" />
        <div className="w-[1px] h-full bg-[#a8a8a8] shrink-0" />
      </div>

      {/* status bar */}
      <div className="flex items-center h-[20px] shrink-0 bg-[#f0eded] text-[11.2px] text-[#222]">
        <div className="pl-[2px] w-[1067px] shrink-0">For Help, press F1</div>
        <div className="w-[56px] h-full border-l border-[#d8d4d4] shrink-0" />
        <div className="w-[71px] h-full border-l border-[#d8d4d4] shrink-0" />
        <div className="w-[46px] h-full border-l border-[#d8d4d4] pl-[4px] leading-[20px] shrink-0">21:36</div>
        <div className="w-[19px] h-full border-l border-[#d8d4d4] text-center font-bold text-[13px] leading-[20px] text-[#008000] shrink-0">$</div>
        <div className="flex-1 h-full border-l border-[#d8d4d4]" />
      </div>

      {/* another window peeking over the caption */}
      <div className="absolute left-[834px] top-0 w-[354px] h-[5px] bg-white border-b border-r border-[#808080]" />
    </div>
  );
}
